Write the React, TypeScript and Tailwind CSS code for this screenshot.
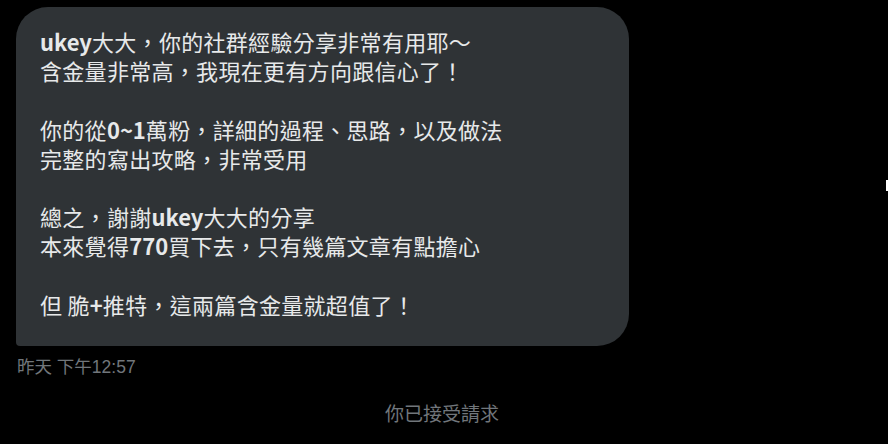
function Latin({ children }: { children: React.ReactNode }) {
  return <span className="font-semibold tracking-normal">{children}</span>;
}

const lines: React.ReactNode[] = [
  <>
    <Latin>ukey</Latin>大大，你的社群經驗分享非常有用耶～
  </>,
  "含金量非常高，我現在更有方向跟信心了！",
  "",
  <>
    你的從<Latin>0~1</Latin>萬粉，詳細的過程、思路，以及做法
  </>,
  "完整的寫出攻略，非常受用",
  "",
  <>
    總之，謝謝<Latin>ukey</Latin>大大的分享
  </>,
  <>
    本來覺得<Latin>770</Latin>買下去，只有幾篇文章有點擔心
  </>,
  "",
  <>
    但 脆<Latin>+</Latin>推特，這兩篇含金量就超值了！
  </>,
];

export default function App() {
  return (
    <div
      lang="zh-Hant-TW"
      className="relative h-[444px] w-[888px] overflow-hidden bg-black font-['Noto_Sans_CJK_TC',_'Noto_Sans',_sans-serif]"
    >
      <div className="pl-4 pt-[7px]">
        <div className="w-[613px] rounded-[32px] rounded-bl-[4px] bg-[#2f3336] pb-[27px] pl-6 pr-6 pt-5 text-[22px] leading-[29.2px] tracking-[0.3px] text-[#e7e9ea]">
          {lines.map((line, i) => (
            <div key={i} className="h-[29.2px] whitespace-pre">
              {line}
            </div>
          ))}
        </div>
      </div>

      <div className="mt-[11px] pl-[17px] font-['Liberation_Sans',_'Noto_Sans_CJK_TC',_sans-serif] text-[17.5px] leading-5 text-[#71767b]">
        昨天 下午12:57
      </div>

      <div className="mt-6 pr-1 text-center text-[19px] leading-6 text-[#71767b]">
        你已接受請求
      </div>

      <div className="absolute right-0 top-[180px] h-[11px] w-[2px] bg-white" />
    </div>
  );
}
